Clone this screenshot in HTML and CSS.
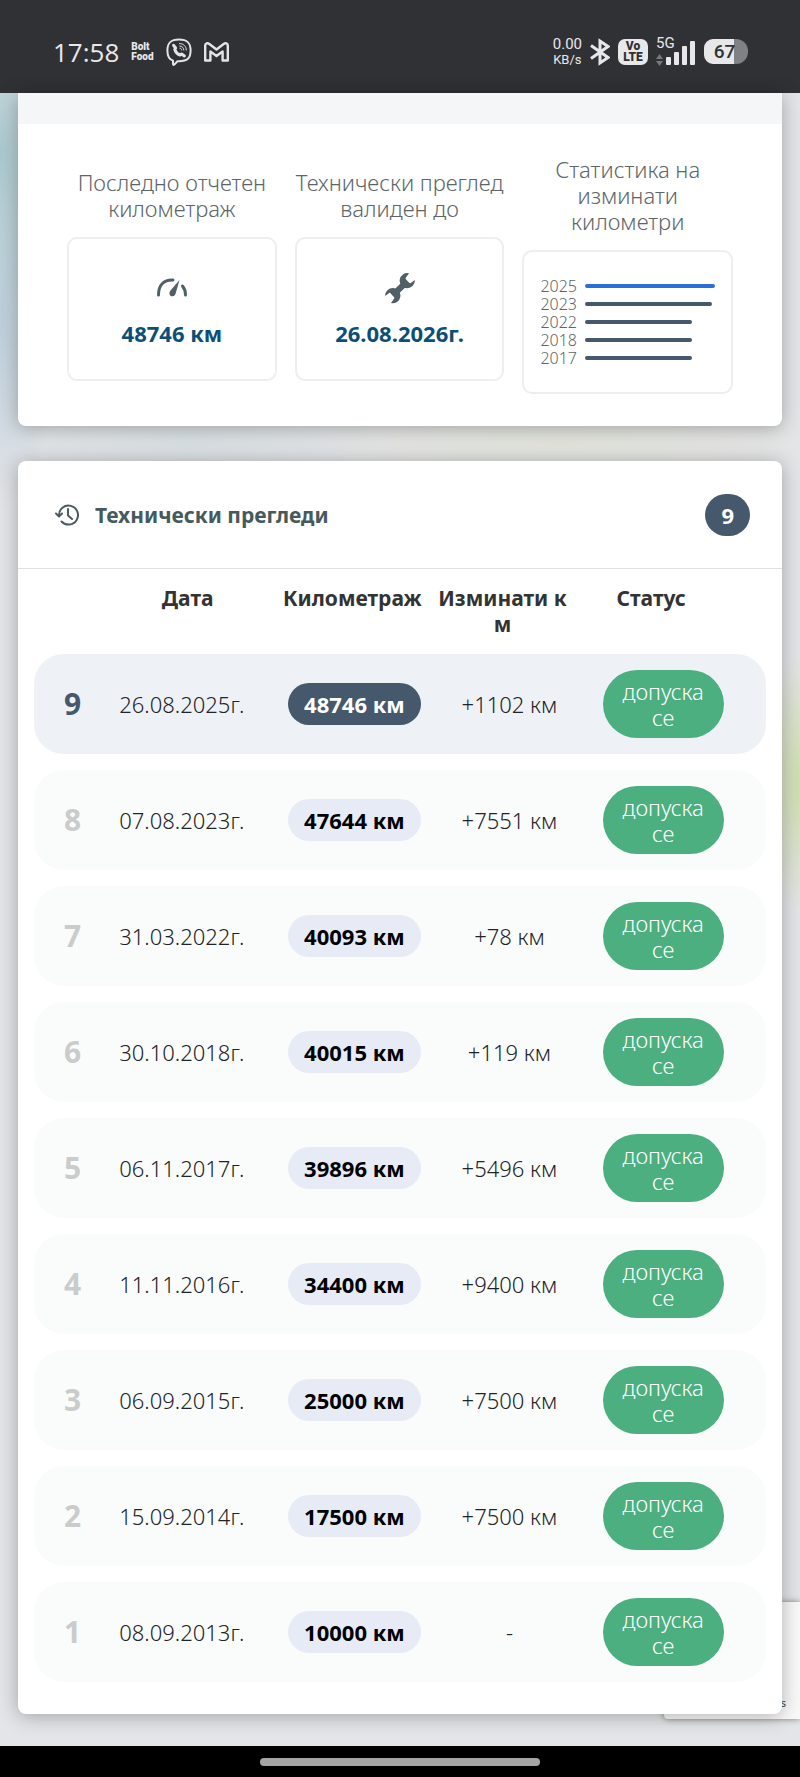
FILE: index.html
```html
<!DOCTYPE html>
<html lang="bg">
<head>
  <meta charset="UTF-8" />
  <title>Технически прегледи</title>
  <meta name="viewport" content="width=device-width, initial-scale=1.0" />
  <link rel="stylesheet" href="styles.css">
</head>
<body>
  <header class="status-bar">
    <div class="status-left">
      <span class="clock">17:58</span>
      <span class="bolt-icon"><span>Bolt</span><span>Food</span></span>
      <svg class="viber-icon" viewBox="0 0 26 28" fill="none" stroke="#e4e4e6" stroke-width="2" stroke-linejoin="round" stroke-linecap="round">
        <path d="M7 22.6C3 21.4 1.4 18 1.4 12.5C1.4 4.500 4.800 1.500 13 1.500S24.600 4.500 24.600 12.500S21.200 23.200 13 23.200H11.500L8.300 26.600C7.600 27.200 7 26.900 7 26Z" />
        <path d="M7.600 7.300L9.600 10L8.800 11.500C9.600 14.200 11.300 16 14 17L15.600 16L18.400 18" stroke-width="3" />
        <path d="M13.500 5.500C17.500 5.600 20.200 8.200 20.300 12M13.800 8C16.200 8.200 17.700 9.700 17.800 12M14 10.200C15 10.300 15.600 10.900 15.700 12" stroke-width="1" />
      </svg>
      <svg class="gmail-icon" viewBox="0 0 25 20" fill="none" stroke="#e4e4e6" stroke-width="2.400" stroke-linejoin="round">
        <path d="M1.200 3.500C1.200 1.200 3.600 .8 5 1.800L12.500 7.500L20 1.800C21.400 .8 23.800 1.200 23.800 3.500V18.500H18.600V9.500L12.500 14L6.400 9.500V18.500H1.200Z" />
      </svg>
    </div>
    <div class="status-right">
      <span class="net-speed"><span>0.00</span><span class="net-unit">KB/s</span></span>
      <svg class="bt-icon" viewBox="0 0 20 28" fill="none" stroke="#e8e8ea" stroke-width="3">
        <path d="M1 7.500L18 19.500L10 25V3L18 8.500L1 20.500" />
      </svg>
      <span class="volte"><span>Vo</span><span>LTE</span></span>
      <div class="signal">
        <span class="signal-type">5G</span>
        <svg class="signal-icon" viewBox="0 0 40 28" fill="#e8e8ea">
          <path d="M0 21L3.500 16L7 21ZM0 23L3.500 28L7 23Z" fill="#77787c" />
          <rect x="10" y="19" width="5" height="8" rx="1" />
          <rect x="18" y="14" width="5" height="13" rx="1" />
          <rect x="26" y="8" width="5" height="19" rx="1" />
          <rect x="34" y="3" width="5" height="24" rx="1" />
        </svg>
      </div>
      <span class="battery">67</span>
    </div>
  </header>

  <main class="page">
    <section class="card summary">
      <div class="summary-top"></div>
      <div class="summary-grid">
        <div class="summary-item">
          <h3>Последно отчетен километраж</h3>
          <div class="box">
            <svg class="box-icon" viewBox="0 0 32 32" fill="none" stroke="#4f6167" stroke-width="3" stroke-linecap="round">
              <path d="M2.500 23C2.500 13 8 7.500 17 8M26.500 14C28.500 16.500 29.500 19.500 29.500 23" />
              <path d="M23.500 8L14.500 18.500C12.500 21 13.500 24.300 16.300 24.300C18.300 24.300 19.200 23 19.700 21.200Z" fill="#4f6167" stroke="none" />
            </svg>
            <strong>48746 км</strong>
          </div>
        </div>
        <div class="summary-item">
          <h3>Технически преглед валиден до</h3>
          <div class="box">
            <svg class="box-icon" viewBox="0 0 32 32" fill="none">
              <path d="M8.500 23.500L23.500 9" stroke="#4f6167" stroke-width="6" />
              <path d="M25 1.300A7.600 7.600 0 1 0 30.800 8L26.400 11.300L22.300 10L21.500 6.200ZM7 31A7.600 7.600 0 1 0 1.200 24L5.600 20.800L9.700 22L10.500 26Z" fill="#4f6167" />
            </svg>
            <strong>26.08.2026г.</strong>
          </div>
        </div>
        <div class="summary-item">
          <h3>Статистика на изминати километри</h3>
          <div class="box chart">
            <div class="chart-row"><span>2025</span><i class="bar current" style="width: 130px"></i></div>
            <div class="chart-row"><span>2023</span><i class="bar" style="width: 127px"></i></div>
            <div class="chart-row"><span>2022</span><i class="bar" style="width: 107px"></i></div>
            <div class="chart-row"><span>2018</span><i class="bar" style="width: 107px"></i></div>
            <div class="chart-row"><span>2017</span><i class="bar" style="width: 107px"></i></div>
          </div>
        </div>
      </div>
    </section>

    <section class="card history">
      <div class="card-head">
        <svg class="history-icon" viewBox="0 0 24 22" fill="none" stroke="#4a5c62" stroke-width="2" stroke-linecap="round" stroke-linejoin="round">
          <path d="M4 11.500A9.500 9.500 0 1 1 6.500 17.500M1 9.500L4 12.500L7 9.500M13 5V11.500L17 15" />
        </svg>
        <h2>Технически прегледи</h2>
        <span class="count">9</span>
      </div>
      <table class="checks">
        <colgroup>
          <col class="col-num"><col class="col-date"><col class="col-km"><col class="col-diff"><col class="col-status">
        </colgroup>
        <thead>
          <tr><th></th><th>Дата</th><th>Километраж</th><th>Изминати км</th><th class="th-status">Статус</th></tr>
        </thead>
        <tbody>
          <tr class="latest"><td class="num">9</td><td class="date">26.08.2025г.</td><td><span class="km">48746 км</span></td><td class="diff">+1102 км</td><td class="status"><span class="pass">допуска се</span></td></tr>
          <tr><td class="num">8</td><td class="date">07.08.2023г.</td><td><span class="km">47644 км</span></td><td class="diff">+7551 км</td><td class="status"><span class="pass">допуска се</span></td></tr>
          <tr><td class="num">7</td><td class="date">31.03.2022г.</td><td><span class="km">40093 км</span></td><td class="diff">+78 км</td><td class="status"><span class="pass">допуска се</span></td></tr>
          <tr><td class="num">6</td><td class="date">30.10.2018г.</td><td><span class="km">40015 км</span></td><td class="diff">+119 км</td><td class="status"><span class="pass">допуска се</span></td></tr>
          <tr><td class="num">5</td><td class="date">06.11.2017г.</td><td><span class="km">39896 км</span></td><td class="diff">+5496 км</td><td class="status"><span class="pass">допуска се</span></td></tr>
          <tr><td class="num">4</td><td class="date">11.11.2016г.</td><td><span class="km">34400 км</span></td><td class="diff">+9400 км</td><td class="status"><span class="pass">допуска се</span></td></tr>
          <tr><td class="num">3</td><td class="date">06.09.2015г.</td><td><span class="km">25000 км</span></td><td class="diff">+7500 км</td><td class="status"><span class="pass">допуска се</span></td></tr>
          <tr><td class="num">2</td><td class="date">15.09.2014г.</td><td><span class="km">17500 км</span></td><td class="diff">+7500 км</td><td class="status"><span class="pass">допуска се</span></td></tr>
          <tr><td class="num">1</td><td class="date">08.09.2013г.</td><td><span class="km">10000 км</span></td><td class="diff">-</td><td class="status"><span class="pass">допуска се</span></td></tr>
        </tbody>
      </table>
    </section>

    <div class="captcha">s</div>
  </main>

  <footer class="nav-bar"><span class="nav-handle"></span></footer>
</body>
</html>
```
FILE: styles.css
```css
:root {
  --text: #212326;
  --muted: #5c6669;
  --navy: #46586b;
  --green: #4caf80;
  --pill: #e6ebf6;
  --row: #fafcfc;
  --line: #eeeeef;
}
* {
  box-sizing: border-box;
}
body {
  margin: 0;
  min-height: 100vh;
  display: flex;
  flex-direction: column;
  font-family: "Noto Sans", "Open Sans", sans-serif;
  font-size: 22px;
  line-height: 26px;
  font-weight: 300;
  color: var(--text);
}
h2, h3 {
  margin: 0;
}

/* phone status bar */
.status-bar {
  height: 93px;
  padding: 10px 52px 0 53px;
  display: flex;
  align-items: center;
  justify-content: space-between;
  background: #303135;
  color: #e8e8ea;
  font-family: Roboto, sans-serif;
  font-weight: 400;
}
.status-left, .status-right {
  display: flex;
  align-items: center;
}
.status-left {
  gap: 12px;
}
.status-right {
  gap: 8px;
}
.clock {
  font-family: "Open Sans", sans-serif;
  font-size: 26px;
}
.bolt-icon, .net-speed, .volte {
  display: flex;
  flex-direction: column;
}
.bolt-icon {
  font-size: 10px;
  line-height: 10px;
  font-weight: 900;
}
.viber-icon {
  width: 26px;
  height: 28px;
}
.gmail-icon {
  width: 25px;
  height: 20px;
}
.net-speed {
  align-items: center;
  font-size: 15px;
  line-height: 16px;
}
.net-unit {
  font-size: 13px;
}
.bt-icon {
  width: 20px;
  height: 28px;
}
.volte {
  width: 30px;
  height: 26px;
  padding-top: 2px;
  align-items: center;
  border-radius: 7px;
  background: #e8e8ea;
  color: #303135;
  font-size: 12px;
  line-height: 11px;
  font-weight: 900;
}
.signal {
  position: relative;
}
.signal-type {
  position: absolute;
  left: 0;
  top: -3px;
  font-size: 15px;
  line-height: 16px;
}
.signal-icon {
  display: block;
  width: 40px;
  height: 28px;
}
.battery {
  width: 44px;
  height: 25px;
  padding-right: 3px;
  border-radius: 9px 12px 12px 9px;
  background: linear-gradient(90deg, #e8e8ea 30px, #808185 30px);
  color: #303135;
  font-size: 19px;
  line-height: 25px;
  font-weight: 500;
  text-align: center;
}

/* page */
.page {
  position: relative;
  z-index: 0;
  flex: 1;
  padding: 0 18px 31px;
  display: flex;
  flex-direction: column;
  gap: 35px;
  background:
    radial-gradient(60px 160px at 0 60px, #a9c9cf, transparent),
    radial-gradient(60px 200px at 0 220px, #bccfdc, transparent),
    radial-gradient(200px 60px at 190px 350px, #d8dfe2, transparent),
    radial-gradient(300px 60px at 560px 350px, #e2e4dc, transparent),
    radial-gradient(40px 130px at 100% 690px, #cfdfae, transparent),
    #e4e5e8;
}
.card {
  background: #fff;
  border-radius: 8px;
  box-shadow: 0 2px 20px rgba(0, 0, 0, 0.3);
}
.summary {
  border-radius: 0 0 8px 8px;
}
.summary-top {
  height: 31px;
  background: #f4f6f8;
}
.summary-grid {
  display: grid;
  grid-template-columns: repeat(3, 1fr);
  gap: 18px;
  align-items: center;
  padding: 32px 49px;
}
.summary-item h3 {
  margin-bottom: 16px;
  font-size: 22px;
  font-weight: 300;
  color: var(--muted);
  text-align: center;
}
.box {
  height: 144px;
  display: flex;
  flex-direction: column;
  align-items: center;
  justify-content: center;
  gap: 16px;
  border: 2px solid var(--line);
  border-radius: 10px;
}
.box-icon {
  width: 32px;
  height: 32px;
}
.box strong {
  font-weight: 700;
  color: #0b4f78;
}
.chart {
  align-items: stretch;
  gap: 0;
  padding: 0 16px;
}
.chart-row {
  display: flex;
  align-items: center;
  gap: 8px;
  font-size: 16px;
  line-height: 18px;
  color: var(--muted);
}
.bar {
  height: 4px;
  border-radius: 2px;
  background: var(--navy);
}
.bar.current {
  background: #2871d8;
}

/* inspections */
.history {
  padding-bottom: 16px;
}
.card-head {
  height: 108px;
  display: flex;
  align-items: center;
  gap: 16px;
  padding: 0 32px 0 37px;
  border-bottom: 1px solid #dfe1e3;
}
.history-icon {
  width: 24px;
  height: 22px;
}
.card-head h2 {
  flex: 1;
  font-size: 21px;
  font-weight: 700;
  color: #465a5c;
}
.count {
  padding: 8px 16px;
  border-radius: 22px;
  background: var(--navy);
  color: #fff;
  font-weight: 700;
}
.checks {
  width: calc(100% - 32px);
  margin: 0 16px;
  table-layout: fixed;
  border-collapse: separate;
  border-spacing: 0 16px;
  text-align: center;
}
.col-num { width: 10%; }
.col-date { width: 22%; }
.col-km { width: 23%; }
.col-diff { width: 18%; }
.col-status { width: 27%; }
.checks th {
  padding: 0 0 1px;
  font-size: 21px;
  font-weight: 700;
  color: #333;
  vertical-align: top;
  word-break: break-all;
}
.checks .th-status {
  padding-right: 32px;
}
.checks td {
  height: 100px;
  padding: 0 0 0 4px;
  background: var(--row);
}
.checks td:first-child {
  border-radius: 30px 0 0 30px;
}
.checks td:last-child {
  border-radius: 0 30px 30px 0;
}
.checks .num {
  font-size: 30px;
  font-weight: 700;
  color: #cacccc;
}
.checks .date {
  padding-left: 12px;
  text-align: left;
}
.checks .diff {
  padding-left: 14px;
}
.checks .status {
  padding-right: 12px;
}
.km {
  display: inline-block;
  padding: 8px 16px;
  border-radius: 21px;
  background: var(--pill);
  color: #000;
  font-weight: 700;
}
.pass {
  display: inline-block;
  width: 121px;
  padding: 8px 16px;
  border-radius: 34px;
  background: var(--green);
  color: #fff;
}
.latest td {
  background: #eef2f7;
}
.latest .num {
  color: var(--navy);
}
.latest .km {
  background: var(--navy);
  color: #fff;
}

/* badge tucked behind the card */
.captcha {
  position: absolute;
  z-index: -1;
  right: 0;
  bottom: 27px;
  width: 136px;
  height: 117px;
  padding: 92px 14px 0 0;
  border-radius: 4px 0 0 4px;
  background: #f9f9f9;
  box-shadow: 0 0 6px #808080;
  color: #444;
  font-size: 11px;
  line-height: 18px;
  font-weight: 400;
  text-align: right;
}

/* gesture bar */
.nav-bar {
  height: 31px;
  display: flex;
  align-items: center;
  justify-content: center;
  background: #000;
}
.nav-handle {
  width: 35%;
  height: 8px;
  border-radius: 4px;
  background: #a5a5a5;
}
```
